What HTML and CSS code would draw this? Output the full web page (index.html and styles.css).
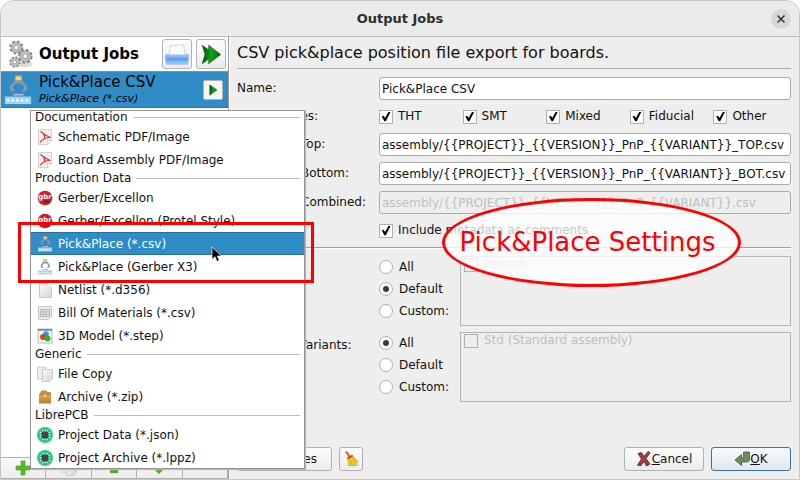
FILE: index.html
```html
<!DOCTYPE html>
<html lang="en">
<head>
<meta charset="utf-8">
<title>Output Jobs</title>
<link rel="stylesheet" href="styles.css">
</head>
<body>
<svg class="defs" aria-hidden="true">
  <defs>
    <linearGradient id="green" x1="0" y1="0" x2="1" y2="0"><stop offset="0" stop-color="#0b4a10"/><stop offset=".5" stop-color="#0fa516"/><stop offset="1" stop-color="#04600a"/></linearGradient>
    <linearGradient id="blue" x1="0" y1="0" x2="0" y2="1"><stop offset="0" stop-color="#a9d0fb"/><stop offset=".45" stop-color="#5a9aea"/><stop offset="1" stop-color="#a8d2ff"/></linearGradient>
    <linearGradient id="page" x1="0" y1="0" x2="1" y2="1"><stop offset="0" stop-color="#fafafa"/><stop offset="1" stop-color="#d6d6d6"/></linearGradient>
    <linearGradient id="box" x1="0" y1="0" x2="0" y2="1"><stop offset="0" stop-color="#e0ab5c"/><stop offset="1" stop-color="#b97a24"/></linearGradient>
    <symbol id="pdf" viewBox="0 0 16 16"><path d="M1.500 .5h13v11l-4 4h-9z" fill="#efefef" stroke="#d2d2d2"/><path d="M14.500 11.500l-4 4v-4z" fill="#fff" stroke="#bbb" stroke-width=".6"/><path d="M3.500 2.500C6 4 8 7 13.500 8.500M3.500 2.500C6 4 8 6 7.500 9M13.500 8.500C9 8.500 5 10.500 3 13.500" fill="none" stroke="#e02b2b" stroke-width="1.100"/></symbol>
    <symbol id="gbr" viewBox="0 0 16 16"><circle cx="8" cy="8" r="7.300" fill="#c81f2d"/><text x="8" y="9" class="gbr-text">gbr</text><path d="M7 11.500h5" stroke="#6e1118" stroke-width="1.500"/></symbol>
    <symbol id="pnp" viewBox="0 0 32 32"><rect x="13" y="1" width="7" height="5" fill="#f7d27a" stroke="#c39a50"/><path d="M12 17l-3-1.500V12l4-4.500h7l4 4.500v3.500L21 17" fill="none" stroke="#8799ab" stroke-width="3"/><rect x="11" y="20" width="11" height="2" fill="#c3aee0"/><rect x="2" y="23" width="28" height="8" fill="#a7d3f2"/><path d="M4 27h25" stroke="#fff" stroke-width="2.500" stroke-dasharray="2.500 2.500"/></symbol>
    <symbol id="doc" viewBox="0 0 16 16"><path d="M2.500 1.500h8l4 4v10h-12z" fill="url(#page)" stroke="#c9c9c9"/><path d="M10.500 1.500v4h4z" fill="#fff" stroke="#ccc" stroke-width=".6"/></symbol>
    <symbol id="sheet" viewBox="0 0 16 16"><path d="M1.500 1.500h13v10l-3 3h-10z" fill="#ececec" stroke="#c6c6c6"/><path d="M3.500 4.500h9v7h-9zM3.500 7h9M3.500 9.500h9M6 4.500v7M9 4.500v7" fill="none" stroke="#a9a9a9" stroke-width=".8"/></symbol>
    <symbol id="model" viewBox="0 0 16 16"><rect x="1" y="1" width="14" height="14" fill="#f5f5f5" stroke="#bbb"/><path d="M1 1h14v1.800H1z" fill="#5b91d2"/><circle cx="9" cy="6" r="2.800" fill="#169ff0"/><circle cx="6" cy="9" r="2.900" fill="#f0342b"/><circle cx="10.500" cy="10.500" r="3" fill="#20bb33"/></symbol>
    <symbol id="copy" viewBox="0 0 16 16"><path d="M.5 1h8v12h-8z" fill="#eee" stroke="#d0d0d0"/><path d="M5.500 3.500h10v9l-3 3h-7z" fill="url(#page)" stroke="#ccc"/><path d="M15.500 12l-4 3.500 1-3.500z" fill="#fff" stroke="#bbb" stroke-width=".5"/></symbol>
    <symbol id="archive" viewBox="0 0 16 16"><path d="M2.500 5l2-3.500h5l1 1.500h3l.5 2z" fill="#c98f43"/><path d="M2 5.500h12v9H2z" fill="url(#box)"/><path d="M2 5.500h12" stroke="#a8702b" stroke-width=".8"/><path d="M7 5.500h2V8H7z" fill="#edcb93"/></symbol>
    <symbol id="chip" viewBox="0 0 16 16"><circle cx="8" cy="8" r="8" fill="#27ce84"/><path d="M5.500 3v10M8 3v10M10.500 3v10M3 5.500h10M3 8h10M3 10.500h10" stroke="#fff"/><rect x="4.500" y="4.500" width="7" height="7" rx=".5" fill="#42464a"/></symbol>
    <symbol id="gear" viewBox="-12 -12 24 24"><circle r="9" fill="none" stroke="#8a8a88" stroke-width="4.500" stroke-dasharray="3.800 3.270"/><circle r="6" fill="none" stroke="#8a8a88" stroke-width="6"/><circle r="6" fill="none" stroke="#c0c1be" stroke-width="4"/></symbol>
  </defs>
</svg>

<div class="window">
  <header class="titlebar">
    <h1>Output Jobs</h1>
    <button class="close" aria-label="Close"><svg viewBox="0 0 16 16"><path d="M4.500 4.500l7 7M11.500 4.500l-7 7" stroke="#333" stroke-width="1.500"/></svg></button>
  </header>

  <div class="content">
    <aside class="sidebar">
      <div class="side-head">
        <svg class="icon-head" viewBox="0 0 28 32"><ellipse cx="17" cy="27" rx="10" ry="3" fill="#ddd"/><use href="#gear" x="1" y="1" width="16" height="16"/><use href="#gear" x="10" y="10" width="17" height="17"/><use href="#gear" x="1" y="18" width="13" height="13"/></svg>
        <h2>Output Jobs</h2>
        <button class="tool" aria-label="Open output folder"><svg viewBox="0 0 28 28"><path d="M2 14h24v10H2z" fill="url(#blue)"/><path d="M7 5l14-1 2 13H5z" fill="#fafafa" stroke="#d0d4da"/><path d="M1.500 15h25l-1 10h-23z" fill="url(#blue)" stroke="#7eb0ee" stroke-width=".7"/></svg></button>
        <button class="tool" aria-label="Run all jobs"><svg viewBox="0 0 28 28"><path d="M4.500 4.500l7 5V4.500l13 10-13 10v-5l-7 5 3-10z" fill="url(#green)" stroke="#056008" stroke-width=".6"/></svg></button>
      </div>
      <div class="job">
        <svg class="icon-job"><use href="#pnp"/></svg>
        <div class="job-text"><div class="job-name">Pick&amp;Place CSV</div><div class="job-type">Pick&amp;Place (*.csv)</div></div>
        <button class="run" aria-label="Run job"><svg viewBox="0 0 16 16"><path d="M4 1.500l9 6.500-9 6.500z" fill="url(#green)"/></svg></button>
      </div>
      <div class="side-foot">
        <button aria-label="Add"><svg viewBox="0 0 16 16"><path d="M6 1h4v5h5v4h-5v5H6v-5H1V6h5z" fill="#59b82b" stroke="#4ba023" stroke-width=".6"/></svg></button>
        <button aria-label="Duplicate"><svg><use href="#copy"/></svg></button>
        <button aria-label="Move up"><svg viewBox="0 0 16 16"><path d="M8 1l7 7h-3v5H4V8H1z" fill="#4caf1b"/></svg></button>
        <button aria-label="Move down"><svg viewBox="0 0 16 16"><path d="M8 14L1 7h3V2h8v5h3z" fill="#4caf1b"/></svg></button>
        <button aria-label="Remove"><svg viewBox="0 0 16 16"><path d="M1 6h14v4H1z" fill="#666"/></svg></button>
      </div>

      <div class="menu" role="menu">
        <div class="menu-title">Documentation</div>
        <button role="menuitem"><svg><use href="#pdf"/></svg>Schematic PDF/Image</button>
        <button role="menuitem"><svg><use href="#pdf"/></svg>Board Assembly PDF/Image</button>
        <div class="menu-title">Production Data</div>
        <button role="menuitem"><svg><use href="#gbr"/></svg>Gerber/Excellon</button>
        <button role="menuitem"><svg><use href="#gbr"/></svg>Gerber/Excellon (Protel Style)</button>
        <button role="menuitem" class="active"><svg><use href="#pnp"/></svg>Pick&amp;Place (*.csv)</button>
        <button role="menuitem"><svg><use href="#pnp"/></svg>Pick&amp;Place (Gerber X3)</button>
        <button role="menuitem"><svg><use href="#doc"/></svg>Netlist (*.d356)</button>
        <button role="menuitem"><svg><use href="#sheet"/></svg>Bill Of Materials (*.csv)</button>
        <button role="menuitem"><svg><use href="#model"/></svg>3D Model (*.step)</button>
        <div class="menu-title">Generic</div>
        <button role="menuitem"><svg><use href="#copy"/></svg>File Copy</button>
        <button role="menuitem"><svg><use href="#archive"/></svg>Archive (*.zip)</button>
        <div class="menu-title">LibrePCB</div>
        <button role="menuitem"><svg><use href="#chip"/></svg>Project Data (*.json)</button>
        <button role="menuitem"><svg><use href="#chip"/></svg>Project Archive (*.lppz)</button>
      </div>
    </aside>

    <main class="settings">
      <h2>CSV pick&amp;place position file export for boards.</h2>
      <form class="form">
        <label for="name">Name:</label>
        <input type="text" id="name" value="Pick&amp;Place CSV">

        <span>Technologies:</span>
        <div class="checks">
          <label><input type="checkbox" checked>THT</label>
          <label><input type="checkbox" checked>SMT</label>
          <label><input type="checkbox" checked>Mixed</label>
          <label><input type="checkbox" checked>Fiducial</label>
          <label><input type="checkbox" checked>Other</label>
        </div>

        <label class="side-label" for="top">Top:</label>
        <input type="text" id="top" value="assembly/{{PROJECT}}_{{VERSION}}_PnP_{{VARIANT}}_TOP.csv">
        <label class="side-label" for="bottom">Bottom:</label>
        <input type="text" id="bottom" value="assembly/{{PROJECT}}_{{VERSION}}_PnP_{{VARIANT}}_BOT.csv">
        <label class="side-label" for="combined">Combined:</label>
        <input type="text" id="combined" disabled value="assembly/{{PROJECT}}_{{VERSION}}_PnP_{{VARIANT}}.csv">

        <label class="option"><input type="checkbox" checked>Include metadata as comments</label>
        <hr>

        <span class="group-label">Boards:</span>
        <div class="choice">
          <div class="radios">
            <label><input type="radio" name="boards">All</label>
            <label><input type="radio" name="boards" checked>Default</label>
            <label><input type="radio" name="boards">Custom:</label>
          </div>
          <div class="list"><label><input type="checkbox" disabled>default</label></div>
        </div>

        <span class="group-label">Assembly Variants:</span>
        <div class="choice">
          <div class="radios">
            <label><input type="radio" name="variants" checked>All</label>
            <label><input type="radio" name="variants">Default</label>
            <label><input type="radio" name="variants">Custom:</label>
          </div>
          <div class="list"><label><input type="checkbox" disabled>Std (Standard assembly)</label></div>
        </div>
      </form>

      <footer class="actions">
        <button class="btn variables">Variables</button>
        <button class="btn clean" aria-label="Clean up"><svg viewBox="0 0 16 16"><ellipse cx="10" cy="14" rx="6" ry="1.500" fill="#ccc"/><path d="M2 1l2-1 3.500 5-2 1z" fill="#b87a2e"/><path d="M4.500 7l5-2.500L15 11l-4 3.500H6z" fill="#f0cb28" stroke="#c79a12" stroke-width=".6"/><path d="M4.500 7.500l5-3" stroke="#c8351f" stroke-width="1.600"/><path d="M7 8l2 5M9.500 7l3 5" stroke="#c79a12" stroke-width=".6"/></svg></button>
        <span class="grow"></span>
        <button class="btn wide"><svg viewBox="0 0 16 16"><path d="M2 2.500l3.500-1L8 5.500l4-5 2 1.500-4 5.500 4 5.500-3.500 2L8 10.500 4.500 15l-3-1L5.500 8z" fill="#a33a45" stroke="#5d2026" stroke-width=".8"/></svg><span><u>C</u>ancel</span></button>
        <button class="btn wide ok"><svg viewBox="0 0 16 16"><path d="M9.500 1h6v7q0 3-3 3h-5v3.500L1 9l6.500-5.500V7h2z" fill="#6e8b5e" stroke="#46593c" stroke-width=".8"/></svg><span><u>O</u>K</span></button>
      </footer>
    </main>
  </div>

  <div class="marker"></div>
  <svg class="pointer" viewBox="0 0 12 17"><path d="M1 1v12.500l3-2.800 2 4.800 2.300-1-2-4.500H10.500z" fill="#000" stroke="#fff" stroke-width=".7"/></svg>
  <div class="callout">Pick&amp;Place Settings</div>
</div>
</body>
</html>
```
FILE: styles.css
```css
* { box-sizing: border-box; }

body {
  margin: 0;
  background: #fff;
  color: #111;
  font: 12px/15px "DejaVu Sans", sans-serif;
}

button, input { font: inherit; color: inherit; margin: 0; }
h1, h2 { margin: 0; }
svg { display: block; flex: none; }
.defs { position: absolute; width: 0; height: 0; }
.gbr-text { font: bold 7px "DejaVu Sans", sans-serif; fill: #fff; text-anchor: middle; }

.window {
  position: relative;
  display: flex;
  flex-direction: column;
  min-height: 100vh;
  border: 1px solid #c6c6c6;
  border-radius: 14px 14px 0 0;
  background: #eee;
  overflow: hidden;
}

.titlebar {
  display: grid;
  grid-template-columns: 1fr auto 1fr;
  align-items: center;
  height: 36px;
  padding: 0 8px;
  border-bottom: 1px solid #bdbdbd;
  background: #ebebeb;
  color: #2e2e2e;
}
.titlebar h1 { grid-column: 2; font-size: 13px; }
.close {
  justify-self: end;
  width: 20px;
  height: 20px;
  padding: 2px;
  border: 0;
  border-radius: 50%;
  background: #d8d8d8;
}

.content { display: flex; flex: 1; }

/* Job list */
.sidebar {
  position: relative;
  display: flex;
  flex-direction: column;
  width: 228px;
  border-right: 1px solid #9a9a9a;
  background: #fff;
}
.side-head {
  display: flex;
  align-items: center;
  gap: 4px;
  height: 34px;
  padding: 0 2px 0 6px;
}
.side-head h2 { flex: 1; font-size: 15px; color: #000; }
.icon-head { width: 28px; height: 30px; }
.tool {
  width: 30px;
  height: 30px;
  padding: 1px;
  border: 1px solid #b2b2b2;
  border-radius: 3px;
  background: linear-gradient(#fdfdfd, #ececec);
}
.job {
  display: flex;
  align-items: center;
  gap: 6px;
  height: 37px;
  padding: 0 5px 0 2px;
  border-top: 1px solid #8a8f93;
  border-bottom: 1px solid #2879ab;
  background: #308cc6;
  color: #000;
}
.icon-job { width: 30px; height: 30px; }
.job-text { flex: 1; }
.job-name { font-size: 15px; line-height: 18px; }
.job-type { font-size: 11px; font-style: italic; }
.run {
  width: 20px;
  height: 20px;
  padding: 2px;
  border: 1px solid #b2b2b2;
  border-radius: 2px;
  background: #f6f6f6;
}
.side-foot { display: flex; margin-top: auto; }
.side-foot button {
  display: flex;
  justify-content: center;
  align-items: center;
  flex: 1;
  height: 22px;
  padding: 0;
  border: 1px solid #b2b2b2;
  border-left-width: 0;
  background: linear-gradient(#fafafa, #ececec);
}
.side-foot svg { width: 16px; height: 16px; }

/* Drop-down menu lying over the dialog */
.menu {
  position: absolute;
  z-index: 1;
  top: 73px;
  left: 29px;
  width: 275px;
  border: solid #949494;
  border-width: 0 1px;
  background: #fff;
  box-shadow: inset 0 1px #949494, inset 0 -1px #949494, 1px 1px 1px #bbb;
}
.menu-title {
  display: flex;
  align-items: center;
  gap: 5px;
  padding: 0 4px;
}
.menu-title::after { content: ""; flex: 1; border-top: 1px solid #bdbdbd; }
.menu button {
  display: flex;
  align-items: center;
  gap: 5px;
  width: 100%;
  height: 23px;
  padding: 1px 6px 0;
  border: 0;
  background: none;
}
.menu svg { width: 16px; height: 16px; }
.menu .active {
  background: #308cc6;
  box-shadow: inset 0 1px #2471a2, inset 0 -1px #2471a2;
  color: #fff;
}

/* Job settings */
.settings {
  display: flex;
  flex-direction: column;
  flex: 1;
  padding: 0 8px 8px 7px;
  border-left: 1px solid #fff;
}
.settings h2 {
  padding: 6px 0;
  border-bottom: 1px solid #a9a9a9;
  font-size: 16px;
  font-weight: normal;
  line-height: 19px;
}
.form {
  display: grid;
  grid-template-columns: 142px 1fr;
  align-items: center;
  gap: 6px 0;
  padding-top: 8px;
}
input[type="text"] {
  width: 100%;
  height: 23px;
  padding: 1px 2px 0;
  border: 1px solid #aaa;
  border-radius: 3px;
  background: #fff;
}
input[type="text"]:disabled { background: #eee; color: #bebebe; }
.side-label { padding-left: 64px; }
.checks { display: grid; grid-template-columns: repeat(5, 1fr); gap: 6px; }
.checks label, .option, .radios label, .list label {
  display: flex;
  align-items: center;
  gap: 6px;
}
.checks label, .option { gap: 5px; height: 21px; }
.option { grid-column: 2; }
.form hr {
  grid-column: 1 / -1;
  width: 100%;
  height: 3px;
  margin: 0;
  border: 0;
  border-top: 1px solid #a0a0a0;
  background: linear-gradient(#fff 1px, #eee 1px);
}
input[type="checkbox"], input[type="radio"] {
  appearance: none;
  display: grid;
  place-items: center;
  flex: none;
  width: 14px;
  height: 14px;
  border: 1px solid #b0b0b0;
  background: #fff;
}
input[type="checkbox"]:checked::before {
  content: "";
  width: 10px;
  height: 10px;
  background: #000;
  clip-path: polygon(8% 50%, 26% 42%, 40% 66%, 74% 4%, 98% 0, 48% 98%, 34% 98%);
}
input[type="checkbox"]:disabled { background: #eee; }
input[type="radio"] { border-radius: 50%; }
input[type="radio"]:checked::before {
  content: "";
  width: 6px;
  height: 6px;
  border-radius: 50%;
  background: #3c3c3c;
}
.group-label { align-self: start; padding-top: 6px; }
.choice { display: grid; grid-template-columns: 81px 1fr; }
.radios label { height: 22px; }
.list {
  height: 70px;
  padding: 0 3px;
  border: 1px solid #b4b4b4;
  color: #bebebe;
}

.actions { display: flex; gap: 7px; margin-top: auto; }
.grow { flex: 1; }
.btn {
  display: flex;
  justify-content: center;
  align-items: center;
  height: 24px;
  padding: 0 4px;
  border: 1px solid #b0b0b0;
  border-radius: 3px;
  background: linear-gradient(#fbfbfb, #ededed);
}
.btn svg { width: 16px; height: 16px; }
.variables { justify-content: flex-end; width: 95px; padding-right: 14px; }
.clean { width: 24px; padding: 0; }
.wide { width: 80px; }
.ok { border-color: #2f76a5; background: linear-gradient(#f8fbfd, #dfe7ed); }

/* Annotations */
.marker {
  position: absolute;
  z-index: 2;
  top: 221px;
  left: 17px;
  width: 296px;
  height: 61px;
  border: 3px solid #f00;
}
.pointer {
  position: absolute;
  z-index: 3;
  top: 245px;
  left: 210px;
  width: 12px;
  height: 17px;
}
.callout {
  position: absolute;
  z-index: 2;
  top: 197px;
  left: 441px;
  display: flex;
  justify-content: center;
  align-items: center;
  width: 299px;
  height: 89px;
  padding: 0 8px 2px 0;
  border: 3px solid #f00;
  border-radius: 50%;
  background: rgba(255, 255, 255, .76);
  color: #f00;
  font-size: 26px;
  line-height: 32px;
  white-space: nowrap;
}
```
